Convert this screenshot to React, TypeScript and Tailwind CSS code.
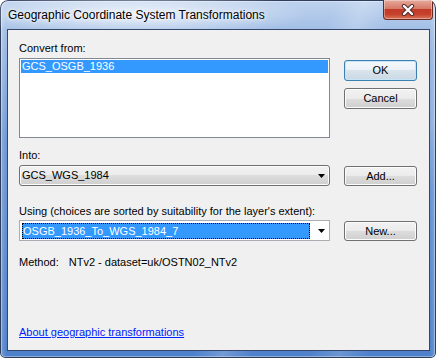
const font = "font-['Liberation_Sans',Arial,sans-serif]";

const Button = ({ label, primary }: { label: string; primary?: boolean }) => (
  <button
    className={
      primary
        ? "flex h-[21px] w-full items-center justify-center rounded-[3px] border border-[#3c7fb1] bg-[linear-gradient(#f4f8fb_0%,#eaf1f6_50%,#d9e4ec_50%,#cbd9e4_100%)] text-[11px] leading-[13px] text-black shadow-[inset_0_0_0_1px_#c4e6f8]"
        : "flex h-[21px] w-full items-center justify-center rounded-[3px] border border-[#707070] bg-[linear-gradient(#f2f2f2_0%,#ebebeb_50%,#dddddd_50%,#cfcfcf_100%)] text-[11px] leading-[13px] text-black shadow-[inset_0_0_0_1px_#fcfcfc]"
    }
  >
    {label}
  </button>
);

const Arrow = () => (
  <svg width="7" height="4" viewBox="0 0 7 4" className="shrink-0">
    <path d="M0 0h7L3.5 4z" fill="#000" />
  </svg>
);

export default function App() {
  return (
    <div
      className={`${font} relative flex h-[358px] w-[436px] flex-col overflow-hidden rounded-t-[8px] rounded-b-[5px] bg-[linear-gradient(112deg,transparent_58%,rgba(255,255,255,0.2)_63%,transparent_68%,transparent_78%,rgba(255,255,255,0.16)_83%,transparent_88%),linear-gradient(90deg,rgba(255,255,255,0.25)_0px,transparent_6px,transparent_430px,rgba(255,255,255,0.2)_436px),linear-gradient(#bfd3ee_0px,#a3bfe6_30px,#6f99d6_140px,#4f81cb_358px)] shadow-[inset_0_0_0_1px_#2f3e5b,inset_0_0_0_2px_rgba(255,255,255,0.35)]`}
    >
      {/* title bar */}
      <div className="flex h-[29px] shrink-0 items-start bg-[radial-gradient(ellipse_175px_24px_at_135px_14px,rgba(255,255,255,0.75),transparent)]">
        <span className="pl-[8px] pt-[8px] text-[12px] leading-[14px] text-black [text-shadow:0_0_6px_#fff,0_0_3px_#fff]">
          Geographic Coordinate System Transformations
        </span>
        <div className="ml-auto mr-[3px] flex h-[20px] w-[50px] items-center justify-center rounded-b-[4px] border border-t-0 border-[#6b2b22] bg-[linear-gradient(#e6aa9c_0%,#d67a68_45%,#c23a28_50%,#c4412d_75%,#dc7458_100%)] shadow-[inset_0_0_0_1px_rgba(255,255,255,0.35)]">
          <svg width="14" height="12" viewBox="0 0 14 12">
            <path d="M3 2l8 8M11 2l-8 8" stroke="#4a2a2a" strokeWidth="4.2" strokeLinecap="round" />
            <path d="M3 2l8 8M11 2l-8 8" stroke="#fff" strokeWidth="2.4" strokeLinecap="round" />
          </svg>
        </div>
      </div>

      {/* client area */}
      <div className="ml-[7px] mr-[6px] flex h-[322px] shrink-0 flex-col border border-[#34476a] bg-[#f0f0f0] pl-[11px] pr-[12px] text-[11px] leading-[13px] text-black">
        {/* convert from */}
        <div className="flex gap-[14px] pt-[12px]">
          <div className="flex w-[311px] flex-col">
            <span>Convert from:</span>
            <div className="mt-[3px] h-[80px] border border-[#828790] bg-white p-[1px]">
              <div className="h-[13px] bg-[#3399ff] pl-[1px] text-white">GCS_OSGB_1936</div>
            </div>
          </div>
          <div className="flex w-[73px] flex-col gap-[7px] pt-[18px]">
            <Button label="OK" primary />
            <Button label="Cancel" />
          </div>
        </div>

        {/* into */}
        <div className="mt-[11px] flex items-end gap-[14px]">
          <div className="flex w-[311px] flex-col">
            <span>Into:</span>
            <div className="mt-[3px] flex h-[21px] items-center rounded-[3px] border border-[#707070] bg-[linear-gradient(#f2f2f2_0%,#ebebeb_50%,#dddddd_50%,#cfcfcf_100%)] pl-[2px] pr-[4px] shadow-[inset_0_0_0_1px_#fcfcfc]">
              <span className="flex-1">GCS_WGS_1984</span>
              <Arrow />
            </div>
          </div>
          <div className="w-[73px] [&>button]:h-[20px]">
            <Button label="Add..." />
          </div>
        </div>

        {/* using */}
        <div className="mt-[19px] flex items-end gap-[14px]">
          <div className="flex w-[311px] flex-col">
            <span>Using (choices are sorted by suitability for the layer's extent):</span>
            <div className="mt-[2px] flex h-[21px] items-center border border-[#abadb3] bg-white pl-[2px] pr-[4px]">
              <span className="h-[16px] w-[288px] border border-dotted border-[#000] bg-[#3399ff] leading-[14px] text-white">
                OSGB_1936_To_WGS_1984_7
              </span>
              <span className="flex-1" />
              <Arrow />
            </div>
          </div>
          <div className="w-[73px] [&>button]:h-[20px]">
            <Button label="New..." />
          </div>
        </div>

        {/* method */}
        <div className="mt-[15px] flex">
          <span>Method:</span>
          <span className="ml-[10px]">NTv2 - dataset=uk/OSTN02_NTv2</span>
        </div>

        {/* link */}
        <a href="#" className="mt-[57px] self-start text-[#0022ff] underline">
          About geographic transformations
        </a>
      </div>
    </div>
  );
}
